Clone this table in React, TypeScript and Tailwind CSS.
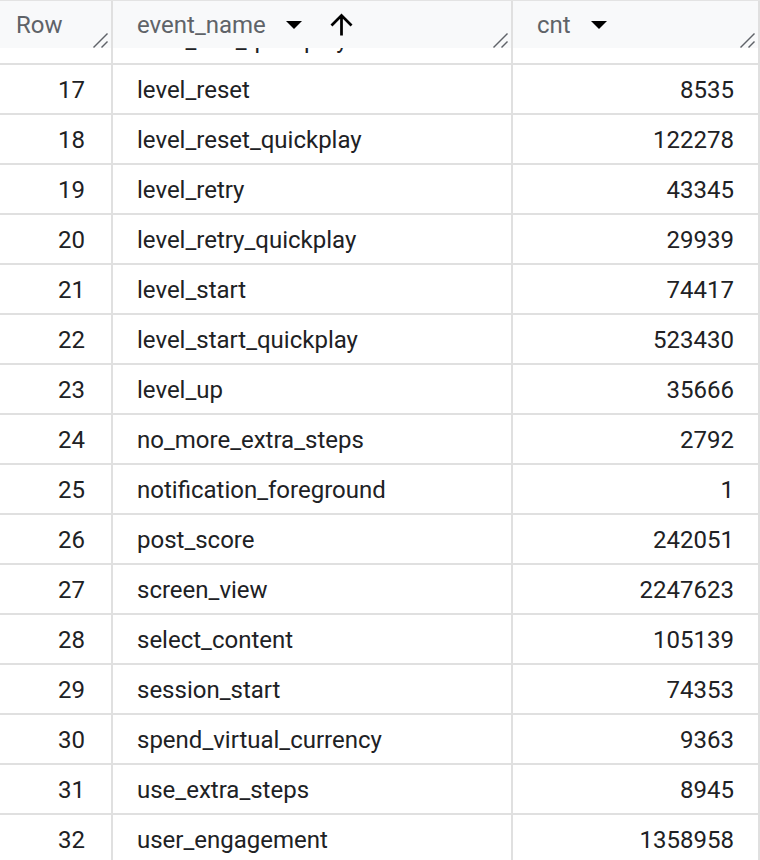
const rows: [number, string, number][] = [
  [16, "level_end_quickplay", 61204],
  [17, "level_reset", 8535],
  [18, "level_reset_quickplay", 122278],
  [19, "level_retry", 43345],
  [20, "level_retry_quickplay", 29939],
  [21, "level_start", 74417],
  [22, "level_start_quickplay", 523430],
  [23, "level_up", 35666],
  [24, "no_more_extra_steps", 2792],
  [25, "notification_foreground", 1],
  [26, "post_score", 242051],
  [27, "screen_view", 2247623],
  [28, "select_content", 105139],
  [29, "session_start", 74353],
  [30, "spend_virtual_currency", 9363],
  [31, "use_extra_steps", 8945],
  [32, "user_engagement", 1358958],
];

function ResizeHandle() {
  return (
    <svg
      className="absolute right-[3px] bottom-0"
      width="15"
      height="15"
      viewBox="0 0 15 15"
      fill="none"
      stroke="#5f6368"
      strokeWidth="1.4"
    >
      <line x1="0.5" y1="14.5" x2="14.5" y2="0.5" />
      <line x1="8.5" y1="14.5" x2="14.5" y2="8.5" />
    </svg>
  );
}

function DropDown() {
  return (
    <svg width="16" height="8" viewBox="0 0 16 8" className="shrink-0">
      <path d="M0 0h16L8 8z" fill="#000" />
    </svg>
  );
}

function ArrowUp() {
  return (
    <svg width="33" height="33" viewBox="0 0 24 24" className="shrink-0">
      <path
        d="M4 12l1.41 1.41L11 7.83V20h2V7.83l5.58 5.59L20 12l-8-8-8 8z"
        fill="#000"
      />
    </svg>
  );
}

export default function App() {
  return (
    <div className="h-[860px] w-[760px] overflow-hidden bg-white font-['Roboto',sans-serif] text-[24px] text-[#202124]">
      {/* header */}
      <div className="sticky top-0 z-10 grid h-12 grid-cols-[113px_400px_247px] border-t border-[#e3e3e3] bg-[#f8f9fa] text-[#5f6368]">
        <div className="relative flex items-center border-r-2 border-[#e0e0e0] pl-4">
          <span>Row</span>
          <ResizeHandle />
        </div>
        <div className="relative flex items-center border-r-2 border-[#e0e0e0] pl-6">
          <span>event_name</span>
          <span className="ml-[20px]">
            <DropDown />
          </span>
          <span className="ml-[23px]">
            <ArrowUp />
          </span>
          <ResizeHandle />
        </div>
        <div className="relative flex items-center border-r-2 border-[#e0e0e0] pl-6">
          <span>cnt</span>
          <span className="ml-[20px]">
            <DropDown />
          </span>
          <ResizeHandle />
        </div>
      </div>

      {/* body, scrolled so row 16 sits under the header */}
      <div className="-mt-[33px]">
        {rows.map(([n, name, cnt]) => (
          <div
            key={n}
            className="grid h-[50px] grid-cols-[113px_400px_247px] border-b-2 border-[#e0e0e0]"
          >
            <div className="flex items-center justify-end border-r-2 border-[#e0e0e0] pr-[26px] pt-0.5">
              {n}
            </div>
            <div className="flex items-center border-r-2 border-[#e0e0e0] pl-6 pt-0.5">
              {name}
            </div>
            <div className="flex items-center justify-end border-r-2 border-[#e0e0e0] pr-6 pt-0.5">
              {cnt}
            </div>
          </div>
        ))}
      </div>
    </div>
  );
}
